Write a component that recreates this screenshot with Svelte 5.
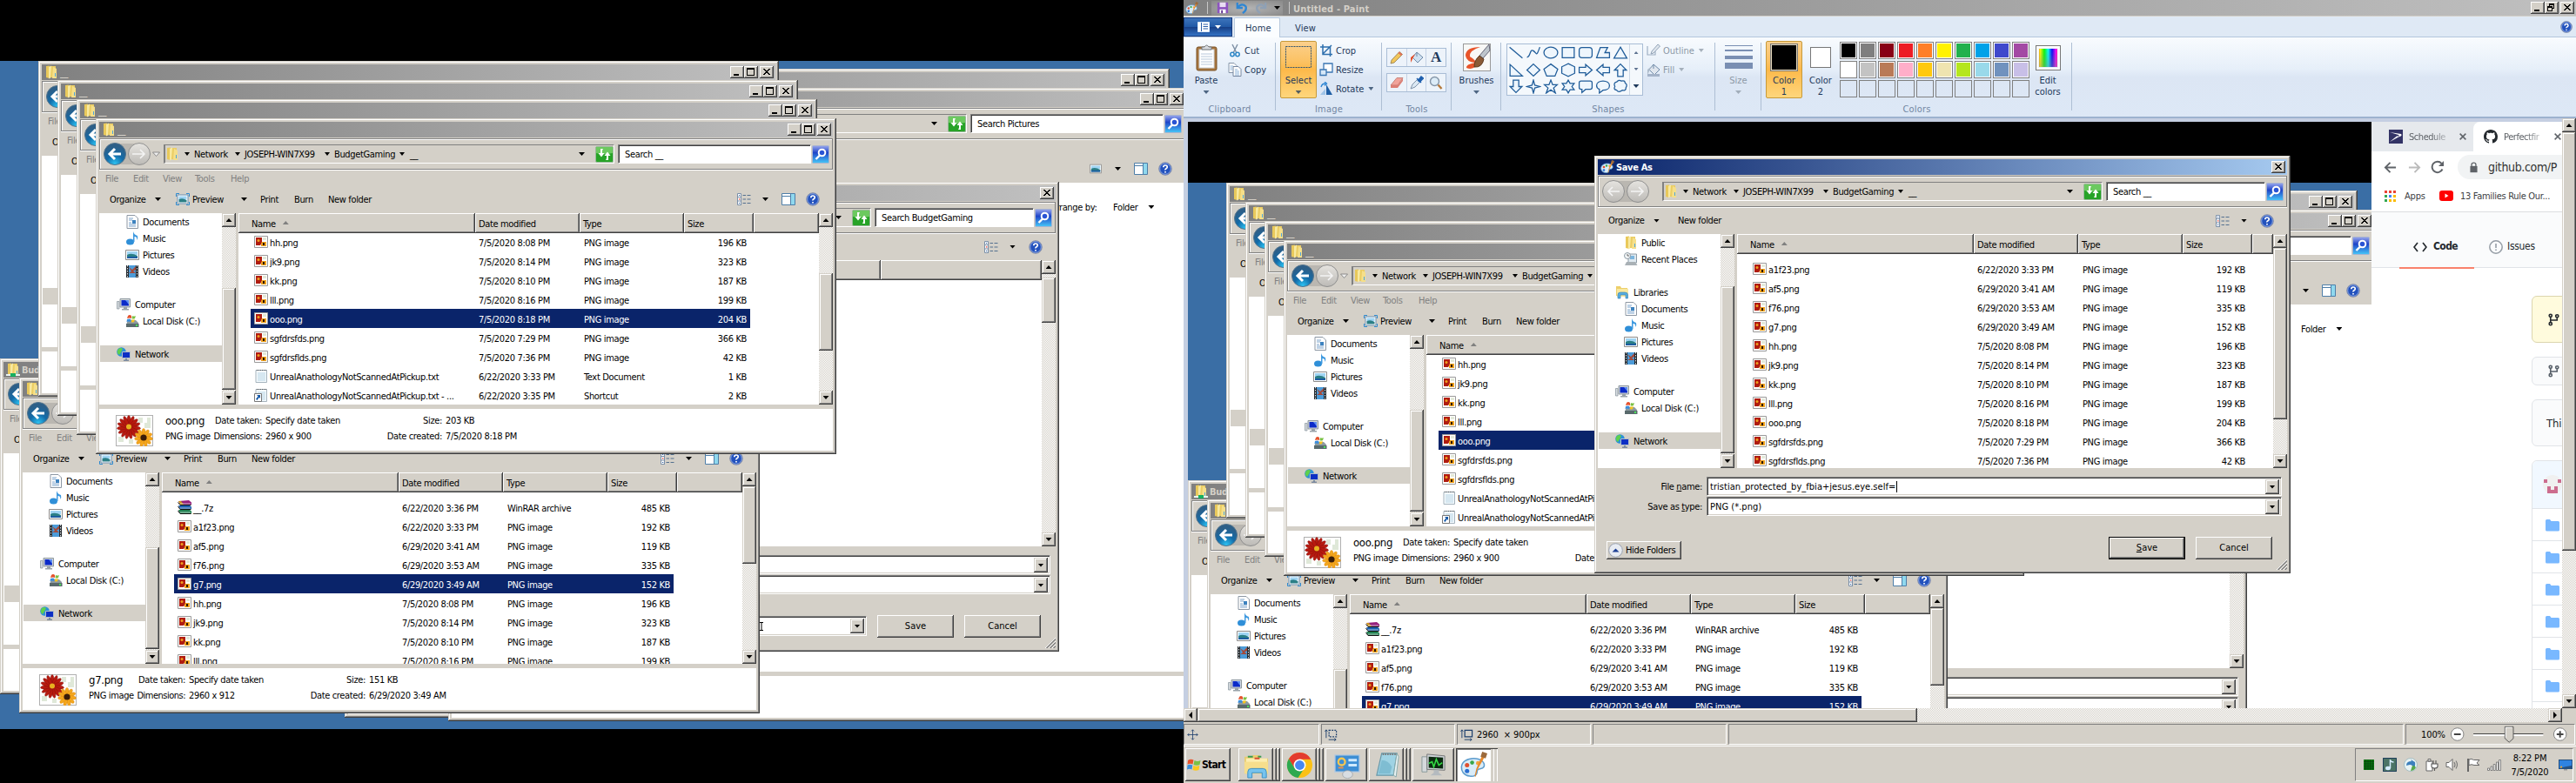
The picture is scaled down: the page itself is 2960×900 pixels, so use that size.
<script>
  const png = (name, date, size) => ({ icon: 'png', name, date, type: 'PNG image', size: size + ' KB' });
  const early = [
    png('a1f23.png', '6/22/2020 3:33 PM', 192),
    png('af5.png', '6/29/2020 3:41 AM', 119),
    png('f76.png', '6/29/2020 3:53 AM', 335),
    png('g7.png', '6/29/2020 3:49 AM', 152)
  ];
  const late = [
    png('hh.png', '7/5/2020 8:08 PM', 196),
    png('jk9.png', '7/5/2020 8:14 PM', 323),
    png('kk.png', '7/5/2020 8:10 PM', 187),
    png('lll.png', '7/5/2020 8:16 PM', 199),
    png('ooo.png', '7/5/2020 8:18 PM', 204),
    png('sgfdrsfds.png', '7/5/2020 7:29 PM', 366),
    png('sgfdrsflds.png', '7/5/2020 7:36 PM', 42)
  ];
  const archive = { icon: 'rar', name: '__.7z', date: '6/22/2020 3:36 PM', type: 'WinRAR archive', size: '485 KB' };
  const tail = [
    { icon: 'txt', name: 'UnrealAnathologyNotScannedAtPickup.txt', date: '6/22/2020 3:33 PM', type: 'Text Document', size: '1 KB' },
    { icon: 'lnk', name: 'UnrealAnathologyNotScannedAtPickup.txt - ...', date: '6/22/2020 3:35 PM', type: 'Shortcut', size: '2 KB' }
  ];
  const rowsLate = [...late, ...tail];
  const rowsEarly = [archive, ...early, ...late.slice(0, 4)];
  const rowsSave = [...early, ...late];

  const navLower = [
    { icon: 'doc', text: 'Documents', sub: true },
    { icon: 'music', text: 'Music', sub: true },
    { icon: 'pic', text: 'Pictures', sub: true },
    { icon: 'video', text: 'Videos', sub: true },
    {},
    { icon: 'computer', text: 'Computer' },
    { icon: 'disk', text: 'Local Disk (C:)', sub: true },
    {},
    { icon: 'network', text: 'Network', on: true }
  ];
  const navSave = [
    { icon: 'folder', text: 'Public', sub: true },
    { icon: 'recent', text: 'Recent Places', sub: true },
    {},
    { icon: 'library', text: 'Libraries' },
    ...navLower
  ];

  const oooInfo = { name: 'ooo.png', dim: '2960 x 900', size: '203 KB', created: '7/5/2020 8:18 PM' };
  const g7Info = { name: 'g7.png', dim: '2960 x 912', size: '151 KB', created: '6/29/2020 3:49 AM' };
  const stack = (x, y) => ({ x, y, w: 851, h: 386, icon: 'folder', title: '__', search: '__', rows: rowsLate, sel: 4, off: 0, thumb: [69, 89], info: oooInfo });
  const windows = [
    { ...stack(0, 412), icon: 'netfolder', title: 'BudgetGaming' },
    { ...stack(22, 434), rows: rowsEarly, off: 7, thumb: [16, 89], info: g7Info },
    stack(44, 70),
    stack(66, 92),
    stack(88, 114),
    stack(110, 136)
  ];

  const palette = [
    '#000', '#7f7f7f', '#880015', '#ed1c24', '#ff7f27', '#fff200', '#22b14c', '#00a2e8', '#3f48cc', '#a349a4',
    '#fff', '#c3c3c3', '#b97a57', '#ffaec9', '#ffc90e', '#efe4b0', '#b5e61d', '#99d9ea', '#7092be', '#c8bfe7',
    '', '', '', '', '', '', '', '', '', ''
  ];
  const shapes = [
    'M1 2L15 14', 'M1 13C5 13 4 3 8 6S11 13 15 2', 'M8 2C12 2 15.500 4.500 15.500 8S12 14 8 14 .5 11.500 .5 8 4 2 8 2Z', 'M1.500 2.500H14.500V13.500H1.500Z', 'M4 2.500H12Q15 2.500 15 5.500V10.500Q15 13.500 12 13.500H4Q1 13.500 1 10.500V5.500Q1 2.500 4 2.500Z', 'M5 2.500H13L10 8H15V13.500H1Z', 'M8 2L15 14H1Z',
    'M1.500 2V14.500H15Z', 'M8 1.500L15 8L8 14.500L1 8Z', 'M8 1.500L15.500 7L12.500 14.500H3.500L.5 7Z', 'M8 1L15 4.500V11.500L8 15L1 11.500V4.500Z', 'M1 5H8V2L15 8L8 14V11H1Z', 'M15 5H8V2L1 8L8 14V11H15Z', 'M5 15V8H1.500L8 1.500L14.500 8H11V15Z',
    'M5 1V8H1.500L8 14.500L14.500 8H11V1Z', 'M8 1L9.500 6.500L15 8L9.500 9.500L8 15L6.500 9.500L1 8L6.500 6.500Z', 'M8 1L10 6H15L11 9.500L13 15L8 11.500L3 15L5 9.500L1 6H6Z', 'M8 1L10 4.500H14.500L12 8L14.500 11.500H10L8 15L6 11.500H1.500L4 8L1.500 4.500H6Z', 'M3 2H13Q15 2 15 4V9Q15 11 13 11H8L4 14.500V11H3Q1 11 1 9V4Q1 2 3 2Z', 'M8 2C12 2 15 4 15 7S12 12 8 12L4 15V11C2 10 1 9 1 7 1 4 4 2 8 2Z', 'M4 3Q6 0 9 2Q13 1 13 4Q16 6 14 9Q14 13 10 12Q6 15 4 12Q0 11 2 8Q0 4 4 3Z'
  ];
  const tasks = [
    { icon: 'explorer', multi: true }, { icon: 'chrome', multi: true }, { icon: 'panel' },
    { icon: 'notepad', multi: true }, { icon: 'monitor' }, { icon: 'palette', multi: true, on: true }
  ];
  const redPetals = Array.from({ length: 15 }, (_, i) => i * 24);
  const goldPetals = Array.from({ length: 11 }, (_, i) => i * 32.7);
</script>

{#snippet icon(name, s = 16)}
  <svg width={s} height={s} viewBox="0 0 16 16" class="ic">
    {#if name === 'folder' || name === 'netfolder'}
      <path d="M2 1L6 .5V15L2 14Z" fill="#e9c95b" /><path d="M5 2L8 .5V14L5 15.500Z" fill="#f8e9a0" />
      <path d="M8 1H13V14H7Z" fill="#ebcd63" /><path d="M10 2L14 4V15H9Z" fill="#f5df8a" /><path d="M12 9h1v4h-1z" fill="#4da6e0" />
      {#if name === 'netfolder'}<path d="M0 13H16V15H0Z" fill="#e8f4f0" /><path d="M5 12H11V16H5Z" fill="#18b060" />{/if}
    {:else if name === 'doc'}
      <path d="M2 .5H11L14.500 4V15.500H2Z" fill="#fff" stroke="#8d97a3" /><path d="M4 4H9M4 6H8M4 9H7M4 11H12M4 13H12" stroke="#7fa5cc" /><path d="M8 6H12V10H8Z" fill="#3d82bf" />
    {:else if name === 'txt' || name === 'lnk'}
      <path d="M2 1.500H14.500V15.500H2Z" fill="#f4fafd" stroke="#a5b3bd" /><path d="M3 1.500H14" stroke="#555" stroke-dasharray="1 1" /><path d="M4 5H13M4 7H13M4 9H13M4 11H13M4 13H13" stroke="#b8d4e4" />
      {#if name === 'lnk'}<path d="M.5 6.500H8.500V15.500H.5Z" fill="#fff" stroke="#777" /><path d="M3 8H7V12L5.800 10.800L3.500 14L2 12.800L4.500 9.500Z" fill="#1559a8" />{/if}
    {:else if name === 'music'}
      <ellipse cx="5.500" cy="12" rx="4.500" ry="3.500" fill="#2f8fd8" /><path d="M9 12V0Q10 4 14 5Q15 8 13 10Q14 6 10.500 6V12Z" fill="#3f9ae0" />
    {:else if name === 'pic' || name === 'view'}
      <path d="M.5 2.500H15.500V13.500H.5Z" fill="#fff" stroke="#8c8c8c" /><path d="M2 4H14V8H2Z" fill="#9fd4f3" /><path d="M2 8Q7 5 14 9V12H2Z" fill="#2b7f86" /><path d="M2 10H14V12H2Z" fill="#1d5da0" />
    {:else if name === 'preview'}
      <path d="M2 3H14V13H2Z" fill="#fff" stroke="#6a8fb0" /><path d="M3.500 4.500H12.500V8H3.500Z" fill="#9fd4f3" /><path d="M3.500 8Q8 6 12.500 9V11.500H3.500Z" fill="#2b7f86" /><path d="M.5 5V1.500H4M12 1.500H15.500V5M15.500 11V14.500H12M4 14.500H.5V11" fill="none" stroke="#2e8ad0" />
    {:else if name === 'video'}
      <path d="M1 1H15V15H1Z" fill="#23282d" /><path d="M4 1H12V15H4Z" fill="#4c9bd8" /><path d="M4 3L8 6L12 2V6L9 7.500L12 10H4L7 8Z" fill="#a34a3a" /><path d="M2.500 1V15M13.500 1V15" stroke="#dfe6ea" stroke-dasharray="1.500 1.500" />
    {:else if name === 'computer'}
      <path d="M.5 4.500H3V13H.5Z" fill="#d7dce0" stroke="#84909a" stroke-width=".7" /><path d="M4 1.500H15.500V11H4Z" fill="#d3d8dc" stroke="#8c979f" /><path d="M5.500 3H14V9.500H5.500Z" fill="#0c2bc8" /><path d="M10 3H14V8Z" fill="#5c8cf0" /><path d="M8 11H12V13H14V14.500H6V13H8Z" fill="#9aa3aa" />
    {:else if name === 'disk'}
      <path d="M2 9L4 7H12L15 10V14H1Z" fill="#8d9aa0" /><path d="M1 11H15.500V15H1Z" fill="#596a6c" /><path d="M12 12H14V14H12Z" fill="#4be05b" /><path d="M3 2Q5 0 7 2V5Q5 4 2 5Z" fill="#e6532d" /><path d="M8 2Q10 3 12 2L11 5Q9 6 7.500 5Z" fill="#7ac043" /><path d="M2 6Q5 5 6.500 6L6 9Q4 8 1.500 9Z" fill="#3a8ddb" /><path d="M7.500 6Q9 7 11 6L10 9Q8 10 7 9Z" fill="#f8c51c" />
    {:else if name === 'network'}
      <circle cx="5.500" cy="5.500" r="5.300" fill="#2c90d8" /><path d="M2 2Q5 0 7 2L5 6L3 9Q0 7 1 4Z" fill="#5ed04c" /><path d="M6.500 5.500H15.500V12.500H6.500Z" fill="#0d2fc4" stroke="#b4bfc9" /><path d="M10 13H12V14.500H14V16H8V14.500H10Z" fill="#7c8ba0" />
    {:else if name === 'recent'}
      <path d="M5 2H14.500V12H5Z" fill="#dfe9f0" stroke="#8c9aa5" /><path d="M7 4H12V8H7Z" fill="#7db6df" /><path d="M3 11H13L15.500 15H1Z" fill="#a9b1b6" /><circle cx="4" cy="4" r="3.500" fill="#f3f6f7" stroke="#8e9ba5" /><path d="M4 2V4H6" stroke="#444" fill="none" stroke-width=".8" />
    {:else if name === 'library'}
      <path d="M1 1H6L7 3H14V12H1Z" fill="#edcf6a" /><path d="M2 4H15V13H2Z" fill="#f8e8a0" /><path d="M3 15V11Q3 8 6 8H11Q14.500 8 14.500 11V15H12V11H6V15Z" fill="#58aee0" stroke="#2f7db4" stroke-width=".6" />
    {:else if name === 'png'}
      <path d="M.5 1.500H15.500V14.500H.5Z" fill="#fff" stroke="#9a9a9a" /><path d="M2 3H9V9L7 12H2Z" fill="#b01c10" /><circle cx="5" cy="6.500" r="1.500" fill="#f0a020" /><path d="M9 8H14V13H8V10Z" fill="#f0a21c" /><path d="M10 9H12V12H10Z" fill="#2d1608" /><path d="M10 3H14V6H10Z" fill="#e3e9d8" />
    {:else if name === 'rar'}
      <path d="M1 1L13 0L16 2.500V5H3Z" fill="#96207c" /><path d="M1 1H4L7 5H3Z" fill="#c99a20" /><path d="M1 6H14L16 7.500V10H3Z" fill="#1a5fae" /><path d="M1 11H14L16 12.500V15.500H3Z" fill="#1f8050" /><path d="M.5 2.500L3 5.500H15.500M.5 7L3 10.500H15.500M.5 12L3 15.500H15.500" stroke="#111" fill="none" /><path d="M3 4H15M3 9H15M3 14H15" stroke="#eee" stroke-width=".7" />
    {:else if name === 'details'}
      <path d="M.5 1.500H4.500V15M.5 1.500V14.500H4.500M.5 5.500H4.500M.5 10H4.500" stroke="#7a8fa8" fill="#fff" /><path d="M2 3H3.200V4H2ZM2 12H3.200V13H2Z" fill="#2a5ca0" /><path d="M2 7.200H3.400V8.600H2Z" fill="#e03020" /><path d="M6.500 3.500H10M11.500 3.500H15.500M6.500 8H10M11.500 8H15.500M6.500 12.500H10M11.500 12.500H15.500" stroke="#54708f" stroke-width="1.200" />
    {:else if name === 'pane'}
      <path d="M.5 1.500H15.500V14.500H.5Z" fill="#fff" stroke="#4e7ea8" /><path d="M10.500 2V14H15V2Z" fill="#8fd8ee" /><path d="M1 4.500H10M10.500 2V14" stroke="#4e7ea8" fill="none" />
    {:else if name === 'help'}
      <circle cx="8" cy="8" r="7.300" fill="#2352bd" stroke="#8a92a8" /><circle cx="8" cy="8" r="6.300" fill="none" stroke="#9fb6e8" stroke-width=".8" /><path d="M5.800 6.200Q5.800 4 8 4T10.300 6Q10.300 7 9 7.800T8 9.500M8 11V12.600" fill="none" stroke="#fff" stroke-width="1.700" />
    {:else if name === 'paint' || name === 'palette'}
      <path d="M8 4C12 4 15 6.500 14 9C13 11 10 9.500 10 11.500C10 14 8 15 5.500 14.500C2 14 .5 11.500 .7 9C1 6 4 4 8 4Z" fill="#d9ecf8" stroke="#5d9ccd" stroke-width=".8" /><circle cx="4" cy="8" r="1.300" fill="#e05030" /><circle cx="7" cy="6.500" r="1.200" fill="#38a648" /><circle cx="4" cy="11.500" r="1.300" fill="#2b6ed0" /><circle cx="10.500" cy="6.800" r="1.200" fill="#f2a33c" />
      <path d="M15 2L10 11L9 15L8.500 14.500L9.500 10L13 2Z" fill="#e88a2c" /><path d="M12 3L13 0L16 1L15 4Z" fill="#9c6a3c" />
    {:else if name === 'save'}
      <path d="M1 1H15V15H1Z" fill="#8d54bf" /><path d="M4 1H12V7H4Z" fill="#e9ddf3" /><path d="M4 10H12V15H4Z" fill="#fff" /><path d="M6 11H8V15H6Z" fill="#5b2a8c" />
    {:else if name === 'undo'}
      <path d="M2 1V8H9M2.500 7.500Q8 1 13 6Q15 11 9 15" fill="none" stroke="#2e86d4" stroke-width="2.600" />
    {:else if name === 'redo'}
      <path d="M14 1V8H7M13.500 7.500Q8 1 3 6Q1 11 7 15" fill="none" stroke="#8fa0b4" stroke-width="2.600" />
    {:else if name === 'cut'}
      <path d="M5 1L10 11M11 1L6 11" stroke="#7d8fa4" stroke-width="1.400" /><circle cx="5" cy="12.500" r="2.200" fill="none" stroke="#2d86c6" stroke-width="1.500" /><circle cx="11" cy="12.500" r="2.200" fill="none" stroke="#2d86c6" stroke-width="1.500" />
    {:else if name === 'copy'}
      <path d="M1 .5H7L10 3.500V11.500H1Z" fill="#fff" stroke="#8494a8" /><path d="M6 4.500H12L15 7.500V15.500H6Z" fill="#fff" stroke="#7586a0" /><path d="M8 8H11M8 10H13M8 12H13M8 14H13M2.500 4H6M2.500 6H5M2.500 8H5" stroke="#8fb4da" />
    {:else if name === 'crop'}
      <path d="M4 1V12.500H15M1 4H12.500V15M4 12L14 2" fill="none" stroke="#2d6fad" stroke-width="1.500" />
    {:else if name === 'resize'}
      <path d="M5 1H15V11H5Z" fill="#fff" stroke="#3a76b3" stroke-width="1.300" /><path d="M1 8H8V14.500H1Z" fill="#d6e8f8" stroke="#3a76b3" stroke-width="1.300" />
    {:else if name === 'rotate'}
      <path d="M8 3V15H15Z" fill="#1f5fa5" /><path d="M7 8V15H1Z" fill="#9fc4e8" /><path d="M2 6Q3 2 7 2M6 0L8.500 2L6 4.500" fill="none" stroke="#2e86d4" stroke-width="1.300" />
    {:else if name === 'pencil'}
      <path d="M1 15L2 11L11 1.500L14.500 4.500L5 14Z" fill="#f1c65b" stroke="#8f7a4a" stroke-width=".8" /><path d="M11 1.500L14.500 4.500L13 6L9.500 3Z" fill="#e0705a" />
    {:else if name === 'bucket' || name === 'fill'}
      <path d="M8 2L15 8L9 14L3 8Z" fill={name === 'fill' ? '#e0e6ee' : '#cfe0f0'} stroke="#6f8aa8" /><path d="M6 4L1 8V14L4 8Z" fill={name === 'fill' ? '#aebccb' : '#e3502c'} /><path d="M8 2V7" stroke="#6f8aa8" />
      {#if name === 'fill'}<path d="M1 13H15V16H1Z" fill="#a4b3c8" />{/if}
    {:else if name === 'outline'}
      <path d="M1 3V13H10V9" fill="none" stroke="#9fb0c4" stroke-width="1.200" /><path d="M5 12L6 9L13 1L15.500 3L8 11Z" fill="#dfe6ee" stroke="#93a4b8" />
    {:else if name === 'eraser'}
      <path d="M1 11L8 2.500H15L9 11Z" fill="#f1a39a" stroke="#b8695e" stroke-width=".7" /><path d="M1 11H9V14H1ZM9 11L15 3V6L9 14Z" fill="#dc7e74" />
    {:else if name === 'pick'}
      <path d="M1 15L3 10L9 4L12 7L6 13Z" fill="#dbe8f3" stroke="#8094aa" /><path d="M8 3L13 8M9.500 5.500L13 1L15.500 3L11.500 7Z" fill="#1e5fae" stroke="#1e5fae" stroke-width="1.500" />
    {:else if name === 'zoom'}
      <circle cx="6.500" cy="6.500" r="5" fill="#dcecf8" stroke="#8495a8" stroke-width="1.400" /><path d="M10.500 10.500L14.500 15" stroke="#b5793a" stroke-width="2.400" />
    {:else if name === 'fork'}
      <g fill="none" stroke="currentColor" stroke-width="1.700"><circle cx="4" cy="3" r="1.700" /><circle cx="4" cy="13" r="1.700" /><circle cx="12" cy="3.500" r="1.700" /><path d="M4 5V11M12 5.500V8.500H4" /></g>
    {:else if name === 'dir'}
      <path d="M0 2.500Q0 1 1.500 1H5L6.500 3H14.500Q16 3 16 4.500V13Q16 14.500 14.500 14.500H1.500Q0 14.500 0 13Z" fill="#79b8ff" />
    {:else if name === 'github'}
      <path fill="#24292e" d="M8 0C3.580 0 0 3.580 0 8c0 3.540 2.290 6.530 5.470 7.590.4.070.55-.17.55-.38 0-.19-.01-.82-.01-1.490-2.010.37-2.530-.49-2.690-.94-.09-.23-.48-.94-.82-1.130-.28-.15-.68-.52-.01-.53.63-.01 1.080.58 1.230.82.72 1.210 1.870.87 2.330.66.070-.52.28-.87.51-1.070-1.780-.2-3.640-.89-3.640-3.950 0-.87.31-1.590.82-2.150-.08-.2-.36-1.020.08-2.120 0 0 .67-.21 2.200.82.64-.18 1.320-.27 2-.27.68 0 1.360.09 2 .27 1.530-1.040 2.200-.82 2.200-.82.44 1.100.16 1.920.08 2.120.51.56.82 1.270.82 2.150 0 3.070-1.870 3.750-3.650 3.950.29.25.54.73.54 1.480 0 1.070-.01 1.930-.01 2.200 0 .21.15.46.55.38A8.013 8.013 0 0016 8c0-4.420-3.580-8-8-8z" />
    {:else if name === 'usps'}
      <path d="M0 0H16V16H0Z" fill="#333366" /><path d="M1 3L14 5Q16 7 11 8.500L1 14L9 7.500H12L11 6Z" fill="#fff" />
    {:else if name === 'back'}
      <path d="M15 8H2M8 2L2 8L8 14" fill="none" stroke="currentColor" stroke-width="2" />
    {:else if name === 'reload'}
      <path d="M13.500 10.500A6.200 6.200 0 1 1 12.500 3.800" fill="none" stroke="#5f6368" stroke-width="2" /><path d="M15 1V7H9Z" fill="#5f6368" />
    {:else if name === 'lock'}
      <path d="M3 6H13V15H3Z" fill="#5f6368" /><path d="M5 7V4Q5 1.500 8 1.500T11 4V7" fill="none" stroke="#5f6368" stroke-width="1.600" />
    {:else if name === 'youtube'}
      <rect y="2" width="16" height="12" rx="3" fill="#f00" /><path d="M6.500 5.500L10.500 8L6.500 10.500Z" fill="#fff" />
    {:else if name === 'x'}
      <path d="M3.500 3.500L12.500 12.500M12.500 3.500L3.500 12.500" stroke="#5f6368" stroke-width="2" />
    {:else if name === 'code'}
      <path d="M5 3L1 8L5 13M11 3L15 8L11 13" fill="none" stroke="#24292e" stroke-width="1.700" />
    {:else if name === 'issue'}
      <circle cx="8" cy="8" r="7.200" fill="none" stroke="#959da5" stroke-width="1.500" /><path d="M8 4V9M8 10.500V12" stroke="#959da5" stroke-width="1.600" />
    {:else if name === 'move'}
      <path d="M8 1V15M1 8H15M6 3L8 1L10 3M6 13L8 15L10 13M3 6L1 8L3 10M13 6L15 8L13 10" fill="none" stroke="#1d3f6c" />
    {:else if name === 'selsize' || name === 'imgsize'}
      <path d="M5.500 2.500H14.500V10.500H5.500Z" fill="none" stroke="#1d3f6c" stroke-width="1.300" stroke-dasharray={name === 'selsize' ? '2 1.300' : ''} /><path d="M2 12V2M.5 4L2 2L3.500 4M5 14H14M12 12.500L14 14L12 15.500" fill="none" stroke="#1d3f6c" />
    {:else if name === 'win'}
      <path d="M1 3Q4 1 7.500 2.500L6.500 7.500Q4 6 .5 7.500Z" fill="#e8522b" /><path d="M8.500 3Q12 5 15.500 3L14.500 8Q11 9.500 7.500 8Z" fill="#7ac143" /><path d="M.5 8.500Q3 7 6.300 8.500L5.500 13.500Q3 12 0 13.500Z" fill="#3b8fdc" /><path d="M7.300 9Q10 10.500 14.300 9L13.500 14Q10 15.500 6.500 14Z" fill="#fbc91e" />
    {:else if name === 'explorer'}
      <path d="M1 3H5L6 2H10V4H15V13H1Z" fill="#e9cd72" /><path d="M2 4H14.500V13H2Z" fill="#fbedb0" /><path d="M3 3H6M9 3H11" stroke="#3a9c50" /><path d="M7 4H10" stroke="#d94c30" /><path d="M1 6H15V13H1Z" fill="#f6de8c" /><path d="M3 15.500V12Q3 10 5 10H12Q14 10 14 12V15.500H11.500V12.500H5.500V15.500Z" fill="#76c3ee" stroke="#3c8fc4" stroke-width=".5" />
    {:else if name === 'chrome'}
      <circle cx="8" cy="8" r="7.500" fill="#fbc116" /><path d="M8 .5A7.500 7.500 0 0 0 1.500 4.300L5 10L8 4.500H14.600A7.500 7.500 0 0 0 8 .5Z" fill="#e33b2e" /><path d="M1.500 4.200A7.500 7.500 0 0 0 7 15.500L10.500 10L8 11.500L4.900 9.800Z" fill="#2da94f" /><circle cx="8" cy="8" r="3.600" fill="#fff" /><circle cx="8" cy="8" r="2.800" fill="#4688f1" />
    {:else if name === 'panel'}
      <path d="M1 2H15.500V12H1Z" fill="#3d8ed4" stroke="#b7cbe0" stroke-width=".7" /><circle cx="5" cy="6" r="2" fill="none" stroke="#f8c750" stroke-width="1.200" /><path d="M9 5H14M9 8H14" stroke="#cfe9ff" stroke-width="1.500" /><path d="M3 9.500H6" stroke="#e9904c" /><ellipse cx="8.500" cy="13.500" rx="3" ry="2.300" fill="#d8dde2" stroke="#9aa0a6" stroke-width=".4" />
    {:else if name === 'notepad'}
      <path d="M5 1H14L12 14H2Z" fill="#9fd3e4" stroke="#6797a8" stroke-width=".6" /><path d="M14 1L15 3L13.500 15L12 14Z" fill="#e9f2f4" stroke="#8aa" stroke-width=".5" /><path d="M5.500 1.500H14" stroke="#777" stroke-dasharray=".8 .6" /><path d="M5 5Q9 5 11 9L10 13L3 13Z" fill="#7fbdd2" />
    {:else if name === 'monitor'}
      <path d="M1 3H4V12H1Z" fill="#d5d9dc" stroke="#899" stroke-width=".5" /><path d="M4 1.500L14.500 2.500V11L4 10.500Z" fill="#ccd2d6" stroke="#777" stroke-width=".5" /><path d="M5 3L13.500 3.500V10L5 9.500Z" fill="#0b2a10" /><path d="M5 7L7 6L8 9L9.500 4.500L11 8L13 6.500" stroke="#33dd44" fill="none" stroke-width=".8" /><path d="M8 11H11V12.500L13 14H6L8 12.500Z" fill="#b4babf" />
    {:else if name === 't1'}
      <path d="M2 2H14V14H2Z" fill="#0a7a12" /><path d="M2 4.500H14M2 7H14M2 9.500H14M2 12H14M4.500 2V14M7 2V14M9.500 2V14M12 2V14" stroke="#053c08" stroke-width=".7" />
    {:else if name === 't2'}
      <path d="M0 0H16V16H0Z" fill="#4c7466" /><path d="M.5 .5H15.500V15.500H.5Z" fill="none" stroke="#20405c" /><ellipse cx="6" cy="12" rx="3" ry="2.200" fill="#d6ecff" /><path d="M8.500 12V2Q9 5 12.500 5" fill="none" stroke="#d6ecff" stroke-width="1.500" />
    {:else if name === 't3'}
      <circle cx="8" cy="8" r="7.500" fill="#e8f3f4" stroke="#8fb0b8" stroke-width=".7" /><path d="M3 9Q3 4 9 4L8 2L13 5Q14 10 11 13Q11 8 7 8Z" fill="#3d80bd" /><path d="M10 9Q13 9 14 11Q12 15 8 15Z" fill="#58a84c" />
    {:else if name === 't4'}
      <path d="M2 4H9V15H2ZM4 1.500H7V4H4Z" fill="#fff" stroke="#666" /><path d="M8 7H15V10Q15 12 11.500 12T8 10ZM10 7V3M13 7V3M11.500 12V15" fill="#fff" stroke="#555" stroke-width="1.100" />
    {:else if name === 't5'}
      <path d="M1 5.500H4L8 1.500V14.500L4 10.500H1Z" fill="#fff" stroke="#666" /><path d="M10 5Q12 8 10 11M12 3.500Q15 8 12 12.500" fill="none" stroke="#777" stroke-width="1.100" />
    {:else if name === 't6'}
      <path d="M2 1V16" stroke="#666" stroke-width="2" /><path d="M3 2Q6 .5 8.500 2.500H15L12 6L15 8.500H9Q6 7 3 8.500Z" fill="#fff" stroke="#666" />
    {:else if name === 't7'}
      <path d="M.5 12H2.500V14.500H.5ZM4 10H6V14.500H4ZM7.200 7.500H9.200V14.500H7.200ZM10.500 5H12.500V14.500H10.500ZM13.500 2.500H15.500V14.500H13.500Z" fill="#fff" stroke="#777" stroke-width=".9" />
    {:else if name === 'show'}
      <path d="M0 2H16V13H0Z" fill="#26507e" /><path d="M1 3H15V9Q8 10 1 12Z" fill="#2f83e0" /><path d="M2 10L4 9.500V11.500H2Z" fill="#f6a522" /><path d="M6 13H10V14.500H6Z" fill="#999" />
    {/if}
  </svg>
{/snippet}

{#snippet caption(glyph)}
  <span class="cap">
    <svg width="16" height="14" viewBox="0 0 16 14" shape-rendering="crispEdges">
      {#if glyph === 'min'}<path d="M4 9H10V11H4Z" />
      {:else if glyph === 'max'}<path d="M3 2H12V11H3ZM4 4V10H11V4Z" fill-rule="evenodd" />
      {:else if glyph === 'restore'}<path d="M5 2H11V8H9V11H3V5H5ZM6 4V5H9V7H10V4ZM4 7V10H8V7Z" fill-rule="evenodd" />
      {:else}<path d="M4 3H6V4H7V5H9V4H10V3H12V4H11V5H10V6H9V7H10V8H11V9H12V10H10V9H9V8H7V9H6V10H4V9H5V8H6V7H7V6H6V5H5V4H4Z" />{/if}
    </svg>
  </span>
{/snippet}

{#snippet titlebar(ic, text, dialog = false, active = false)}
  <div class="title" class:active>
    {@render icon(ic)}
    <b>{text}</b>
    {#if !dialog}{@render caption('min')}{@render caption('max')}{/if}
    <span class="closegap"></span>{@render caption('close')}
  </div>
{/snippet}

{#snippet vscroll(start, size)}
  <div class="vs">
    <span class="sb"><i class="up"></i></span>
    <span class="thumb" style="margin-top:{start - 16}px;height:{size}px"></span>
    <span class="sb last"><i class="dn"></i></span>
  </div>
{/snippet}

{#snippet band(search, dialog)}
  <div class="band" class:dialog>
    <svg class="circles" width={dialog ? 56 : 72} height="30" viewBox="0 0 {dialog ? 56 : 72} 30">
      <defs>
        <radialGradient id="bk" cx=".5" cy=".95" r=".8"><stop offset="0" stop-color="#2cc4f4" /><stop offset=".5" stop-color="#136ba8" /><stop offset="1" stop-color="#2d5f88" /></radialGradient>
        <linearGradient id="fw" x2="0" y2="1"><stop offset="0" stop-color="#e6e4e0" /><stop offset="1" stop-color="#bcbab6" /></linearGradient>
      </defs>
      <path d="M14 3H42Q36 14 42 27H14Z" fill="#bab7b1" />
      <circle cx="14" cy="15" r="12.500" fill={dialog ? 'url(#fw)' : 'url(#bk)'} stroke={dialog ? '#8f8f8f' : '#54748c'} />
      <circle cx="42" cy="15" r="12.500" fill="url(#fw)" stroke="#8f8f8f" />
      <path d={dialog ? 'M21 15H8M13 10L8 15L13 20' : 'M21 15H9M14 9L8 15L14 21'} fill="none" stroke={dialog ? '#f4f4f4' : '#fff'} stroke-width={dialog ? 1.600 : 3} />
      <path d="M34 15H48M43 10L48 15L43 20" fill="none" stroke="#f4f4f4" stroke-width="1.600" />
      {#if !dialog}<path d="M57.500 13H65.500L61.500 17.500Z" fill="#eee" stroke="#777" stroke-width=".8" />{/if}
    </svg>
    <div class="addr">
      <div class="crumbs">
        {@render icon('folder')}<i class="dn s"></i><span>Network</span><i class="dn s"></i><span>JOSEPH-WIN7X99</span><i class="dn s"></i><span>BudgetGaming</span><i class="dn s"></i><span>__</span>
      </div>
      <i class="dn"></i>
      <svg class="go" width="21" height="19" viewBox="0 0 21 19"><rect x=".5" y=".5" width="20" height="18" rx="1.500" fill="#27a327" stroke="#9bb89b" /><path d="M1 1H20V8Q10 10 1 8Z" fill="#6cc95f" /><path d="M9 3H6V8H3.500L7 12.500L10.500 8H8V5ZM12 16H15V11H17.500L14 6.500L10.500 11H13V14Z" fill="#fff" /></svg>
    </div>
    <div class="find"><span>Search {search}</span></div>
    <svg class="lens" width="20" height="21" viewBox="0 0 20 21"><defs><linearGradient id="ln" x2="0" y2="1"><stop offset="0" stop-color="#9aa8ee" /><stop offset=".4" stop-color="#1f45c8" /><stop offset="1" stop-color="#46c8f8" /></linearGradient></defs><rect x=".5" y=".5" width="19" height="20" rx="1" fill="url(#ln)" stroke="#a8b4d0" /><circle cx="11.500" cy="8.500" r="3.800" fill="#2a54d4" stroke="#fff" stroke-width="2" /><path d="M9 11.500L4.500 16" stroke="#fff" stroke-width="2.400" /></svg>
  </div>
{/snippet}

{#snippet nav(items, thumb)}
  <div class="nav">
    {#each items as n}
      <div class="nrow" class:on={n.on} class:sub={n.sub}>{#if n.text}{@render icon(n.icon)}<span>{n.text}</span>{/if}</div>
    {/each}
  </div>
  {@render vscroll(thumb[0], thumb[1])}
{/snippet}

{#snippet list(rows, sel, off, thumb)}
  <div class="list">
    <div class="head">
      {#if rows.length}<span class="c1">Name<i class="sort"></i></span><span>Date modified</span><span>Type</span><span class="c4">Size</span>{:else}<span class="c0"></span>{/if}
      <span class="c5"></span>
    </div>
    <div class="rows" style="padding-top:{off}px">
      {#each rows as r, i}
        <div class="row" class:sel={i === sel}>{@render icon(r.icon)}<span class="n">{r.name}</span><span class="d">{r.date}</span><span class="d">{r.type}</span><span class="z">{r.size}</span></div>
      {/each}
    </div>
  </div>
  {@render vscroll(thumb[0], thumb[1])}
{/snippet}

{#snippet flower()}
  <svg class="flower" width="43" height="36" viewBox="0 0 43 36">
    <rect x=".5" y=".5" width="42" height="35" fill="#fff" stroke="#b0b0b0" />
    <path d="M26 3H31V9H36V3H40V15H33V9H26ZM3 25H9V31H3ZM15 28H20V33H15Z" fill="#dfe8d8" />
    {#each redPetals as a}<ellipse cx="15" cy="6.500" rx="2" ry="6" fill="#b8190f" stroke="#86120c" stroke-width=".5" transform="rotate({a} 15 14)" />{/each}
    <circle cx="15" cy="13.500" r="3" fill="#e8b020" />
    {#each goldPetals as a}<ellipse cx="32" cy="20" rx="2" ry="4.500" fill="#f4a71d" stroke="#d8820f" stroke-width=".4" transform="rotate({a} 32 26)" />{/each}
    <circle cx="32" cy="26" r="3.600" fill="#3a1c08" />
  </svg>
{/snippet}

{#snippet explorer(w)}
  <section class="win" style="left:{w.x}px;top:{w.y}px;width:{w.w}px;height:{w.h}px">
    {@render titlebar(w.icon, w.title)}
    {@render band(w.search, false)}
    <div class="menu">{#if w.rows}<span>File</span><span>Edit</span><span>View</span><span>Tools</span><span>Help</span>{/if}</div>
    <div class="tools">
      {#if w.rows}
        <span class="org">Organize</span><i class="dn"></i><span class="pv">{@render icon('preview')}</span><span class="pt">Preview</span><i class="dn"></i><span class="pr">Print</span><span class="bu">Burn</span><span>New folder</span>
      {/if}
      <span class="fill"></span>
      <span class="vi">{@render icon(w.rows ? 'details' : 'view', w.rows ? 16 : 14)}</span><i class="dn"></i><span class="pn">{@render icon('pane')}</span>{@render icon('help')}
    </div>
    <div class="panes">
      {#if w.rows}
        {@render nav(navLower, [86, 117])}
        <div class="gap"></div>
        {@render list(w.rows, w.sel, w.off, w.thumb)}
      {:else}
        <div class="arrange"><span>Arrange by:</span><span>Folder</span><i class="dn"></i></div>
      {/if}
    </div>
    <div class="info">
      {#if w.info}
        {@render flower()}
        <div class="grid">
          <span class="fname">{w.info.name}</span><span class="r">Date taken:</span><span>Specify date taken</span><span class="r">Size:</span><span>{w.info.size}</span>
          <span>PNG image</span><span class="r tight">Dimensions:</span><span>{w.info.dim}</span><span class="r">Date created:</span><span>{w.info.created}</span>
        </div>
      {/if}
    </div>
  </section>
{/snippet}

{#snippet combo(text, caret = false)}
  <div class="combo"><span>{text}{#if caret}<i class="caret"></i>{/if}</span><span class="sb"><i class="dn"></i></span></div>
{/snippet}

{#snippet saveDialog(d)}
  <section class="win dlg" style="left:{d.x}px;top:{d.y}px;width:{d.w}px;height:{d.h}px">
    {@render titlebar('paint', 'Save As', true, d.active)}
    {@render band(d.search, true)}
    <div class="tools"><span class="org">Organize</span><i class="dn"></i><span class="nf">New folder</span><span class="fill"></span>{@render icon('details')}<i class="dn vd"></i>{@render icon('help')}</div>
    <div class="panes">
      {@render nav(navSave, d.nthumb)}
      <div class="gap"></div>
      {@render list(d.rows, -1, 7, d.thumb)}
    </div>
    <div class="form">
      <label>File <u>n</u>ame:</label>{@render combo(d.file, d.active)}
      <label>Save as <u>t</u>ype:</label>{@render combo('PNG (*.png)')}
    </div>
    <div class="acts">
      {#if d.active}
        <span class="hide"><svg width="17" height="17" viewBox="0 0 17 17"><circle cx="8.500" cy="8.500" r="7.800" fill="#e7ebf2" stroke="#9aa2b0" /><path d="M4.500 10.500L8.500 6.500L12.500 10.500Z" fill="#1c3f94" /></svg>Hide Folders</span>
        <span class="fill"></span>
      {:else}
        <span class="fill"></span><div class="enc">{@render combo('')}</div>
      {/if}
      <span class="btn" class:def={d.active}>{#if d.active}<u>S</u>ave{:else}Save{/if}</span><span class="btn">Cancel</span>
    </div>
    <svg class="grip" width="12" height="12" viewBox="0 0 12 12"><path d="M0 12L12 0M4 12L12 4M8 12L12 8" stroke="#fff" /><path d="M1.500 12L12 1.500M5.500 12L12 5.500M9.500 12L12 9.500" stroke="#808080" stroke-width="1.400" /></svg>
  </section>
{/snippet}

{#snippet desktop()}
  <div class="screen">
    <div class="desk">
      <div class="layer">
        {@render explorer({ x: 396, y: 79, w: 948, h: 746, icon: 'folder', title: '', search: '' })}
        {@render explorer({ x: 515, y: 101, w: 851, h: 728, icon: 'folder', title: '', search: 'Pictures' })}
        {@render saveDialog({ x: 256, y: 209, w: 961, h: 540, search: 'BudgetGaming', rows: [], thumb: [20, 52], nthumb: [60, 192], file: '', active: false })}
        <svg class="beam" width="6" height="10" viewBox="0 0 6 10"><path d="M1 .5H5M3 .5V9.500M1 9.500H5" stroke="#000" /></svg>
        {#each windows as w}{@render explorer(w)}{/each}
      </div>
    </div>
  </div>
{/snippet}

{#snippet small(ic, text, drop = false, off = false)}
  <div class="small" class:off>{@render icon(ic)}<span>{text}</span>{#if drop}<i class="dn"></i>{/if}</div>
{/snippet}

<main>
  <div class="left">{@render desktop()}</div>

  <div class="paint">
    <header>
      {@render icon('paint', 15)}<i class="bar"></i>
      <span class="qa">{@render icon('save', 14)}{@render icon('undo', 14)}{@render icon('redo', 14)}<i class="dn"></i></span>
      <i class="bar"></i><b>Untitled - Paint</b>
      {@render caption('min')}{@render caption('restore')}<span class="closegap"></span>{@render caption('close')}
    </header>
    <nav class="tabs">
      <span class="app"><svg width="14" height="12" viewBox="0 0 14 12"><path d="M.5 .5H13.500V11.500H.5Z" fill="#fff" stroke="#dbe8f8" /><path d="M4.500 1V11" stroke="#2a5da8" /><path d="M6.500 3H12M6.500 5.500H12M6.500 8H12" stroke="#2a5da8" /></svg><i class="dn"></i></span>
      <span class="tab on">Home</span><span class="tab">View</span><span class="fill"></span>{@render icon('help', 14)}
    </nav>
    <div class="ribbon">
      <div class="grp" style="width:106px">
        <div class="body">
          <div class="big"><div class="pic"><svg width="25" height="31" viewBox="0 0 25 31"><rect x="1" y="3" width="23" height="27" rx="2" fill="#a8763f" stroke="#7b5327" /><rect x="4" y="6" width="17" height="21" fill="#fff" stroke="#ccd3da" /><path d="M6 11H19M6 14H19M6 17H19M6 20H19M6 23H19" stroke="#b8c8da" /><path d="M7 6V3H10Q12.500 -1 15 3H18V6Z" fill="#d7dade" stroke="#73797f" /></svg></div><span>Paste</span><i class="dn"></i></div>
          <div class="col">{@render small('cut', 'Cut')}{@render small('copy', 'Copy')}</div>
        </div>
        <div class="lab">Clipboard</div>
      </div>
      <div class="grp" style="width:122px">
        <div class="body">
          <div class="big hot"><div class="pic"><svg width="32" height="28" viewBox="0 0 32 28"><rect x="1.500" y="1.500" width="29" height="24" fill="none" stroke="#2a5070" stroke-dasharray="2 1" /></svg></div><span>Select</span><i class="dn"></i></div>
          <div class="col im">{@render small('crop', 'Crop')}{@render small('resize', 'Resize')}{@render small('rotate', 'Rotate', true)}</div>
        </div>
        <div class="lab">Image</div>
      </div>
      <div class="grp" style="width:80px">
        <div class="body tb">
          <div class="trio"><span>{@render icon('pencil')}</span><span>{@render icon('bucket')}</span><span class="A">A</span></div>
          <div class="trio"><span>{@render icon('eraser')}</span><span>{@render icon('pick')}</span><span>{@render icon('zoom')}</span></div>
        </div>
        <div class="lab">Tools</div>
      </div>
      <div class="grp" style="width:57px">
        <div class="body mid"><div class="big"><div class="pic"><svg width="32" height="32" viewBox="0 0 32 32"><rect x=".5" y=".5" width="31" height="31" fill="#f8f8f6" stroke="#999" /><path d="M20 4Q3 4 3 14Q4 21 14 22Q3 24 4 28Q12 31 16 24Q15 19 8 15Q7 8 20 4Z" fill="#e8542a" /><path d="M30 1L31 8L23 17L19 14Z" fill="#bfc6cc" stroke="#667" /><path d="M19 14L24 18Q22 28 13 27Q13 19 19 14Z" fill="#8a5a35" stroke="#5c3a1e" /></svg></div><span>Brushes</span><i class="dn"></i></div></div>
      </div>
      <div class="grp" style="width:246px">
        <div class="body sh">
          <div class="gallery">
            <div class="shapes">{#each shapes as p}<svg width="18" height="17" viewBox="-.5 0 17 16"><path d={p} fill={p.endsWith('Z') ? '#eef6fd' : 'none'} stroke="#1f5c99" stroke-width="1.200" /></svg>{/each}</div>
            <div class="gs"><i class="up"></i><i class="dn"></i><i class="dn more"></i></div>
          </div>
          <div class="col">{@render small('outline', 'Outline', true, true)}{@render small('fill', 'Fill', true, true)}</div>
        </div>
        <div class="lab">Shapes</div>
      </div>
      <div class="grp" style="width:53px">
        <div class="body mid"><div class="big off"><div class="pic"><svg width="32" height="28" viewBox="0 0 32 28" fill="#7a8fb3"><path d="M0 0H32V1H0ZM0 5H32V7H0ZM0 12H32V16H0ZM0 20H32V27H0Z" /></svg></div><span>Size</span><i class="dn"></i></div></div>
      </div>
      <div class="grp" style="width:357px">
        <div class="body">
          <div class="big hot"><div class="pic"><b class="sw one"></b></div><span>Color</span><span>1</span></div>
          <div class="big"><div class="pic"><b class="sw two"></b></div><span>Color</span><span>2</span></div>
          <div class="pal">{#each palette as c}<span style={c ? `background-color:${c}` : ''} class:none={!c}></span>{/each}</div>
          <div class="big"><div class="pic"><b class="rainbow"></b></div><span>Edit</span><span>colors</span></div>
        </div>
        <div class="lab">Colors</div>
      </div>
    </div>

    <div class="work">
      <div class="canvas">
        <div class="sheet">
          {@render desktop()}
          <div class="chrome">
            <div class="ctabs">
              <div class="ct">{@render icon('usps')}<span>Schedule</span>{@render icon('x', 12)}</div>
              <div class="ct on">{@render icon('github')}<span>Perfectfir</span>{@render icon('x', 12)}</div>
            </div>
            <div class="cnav"><span class="bk">{@render icon('back', 15)}</span><span class="fwd">{@render icon('back', 15)}</span>{@render icon('reload', 16)}<div class="url">{@render icon('lock', 13)}<span>github.com/P</span></div></div>
            <div class="marks"><span class="dots">{#each ['#ea4335', '#ea4335', '#ea4335', '#34a853', '#4285f4', '#fbbc05', '#34a853', '#fbbc05', '#fbbc05'] as c}<i style="background:{c}"></i>{/each}</span><span class="ap">Apps</span>{@render icon('youtube')}<span class="fam">13 Families Rule Our...</span></div>
            <div class="gtabs"><div class="gt on">{@render icon('code', 16)}<b>Code</b></div><div class="gt">{@render icon('issue', 16)}<span>Issues</span></div></div>
            <div class="gbody">
              <div class="box y">{@render icon('fork', 15)}</div>
              <div class="box f">{@render icon('fork', 15)}</div>
              <div class="box t">Thi</div>
              <div class="box files">
                <div class="fh"><svg width="22" height="22" viewBox="0 0 22 22"><circle cx="11" cy="11" r="11" fill="#f0f0f0" /><path d="M1 5H5V9H1ZM17 5H21V9H17ZM5 13H9V17H13V13H17V21H5Z" fill="#cc6d8f" /></svg></div>
                {#each Array(7) as _}<div class="fr">{@render icon('dir')}</div>{/each}
              </div>
            </div>
          </div>
        </div>
        {@render vscroll(16, 481)}
      </div>
      <div class="hs"><span class="sb"><i class="lt"></i></span><span class="ht"></span><span class="fill"></span><span class="sb"><i class="rt"></i></span><span class="corner"></span></div>
      <div class="status">
        <span style="width:156px">{@render icon('move', 13)}</span><span style="width:154px">{@render icon('selsize', 15)}</span><span style="width:154px">{@render icon('imgsize', 15)}<em>2960 &nbsp;× 900px</em></span><span style="width:154px"></span><span style="width:776px"></span>
        <span class="zm"><em>100%</em><svg width="148" height="22" viewBox="0 0 148 22"><g fill="#fff" stroke="#808080"><circle cx="9" cy="11" r="7.500" /><circle cx="131" cy="11" r="7.500" /></g><path d="M5 11H13M127 11H135M131 7V15" stroke="#444" stroke-width="2" /><path d="M28 10H111V11H28Z" fill="#444" /><path d="M28 11H111V13H28Z" fill="#fff" /><path d="M65.500 2H75.500V16L70.500 20.500L65.500 16Z" fill="#d4d0c8" stroke="#555" /><path d="M66.500 15V3H74" fill="none" stroke="#fff" /></svg></span>
      </div>
    </div>

    <footer>
      <span class="start">{@render icon('win', 16)}<b>Start</b></span>
      <div class="tasks">
        {#each tasks as t}
          <span class="task" class:on={t.on} class:wide={!t.multi}><span class="tbtn">{@render icon(t.icon, 31)}</span>{#if t.multi}<i></i><i></i>{/if}</span>
        {/each}
      </div>
      <span class="fill"></span>
      <div class="tray">{@render icon('t1')}{@render icon('t2')}{@render icon('t3')}{@render icon('t4')}{@render icon('t5')}{@render icon('t6')}{@render icon('t7')}<div class="clock"><span>8:22 PM</span><span>7/5/2020</span></div>{@render icon('show')}</div>
    </footer>

    {@render saveDialog({ x: 472, y: 179, w: 800, h: 480, search: '__', rows: rowsSave, thumb: [16, 197], nthumb: [60, 192], file: 'tristian_protected_by_fbia+jesus.eye.self=', active: true })}
  </div>
</main>

<style>
  :global(body) { margin: 0; background: #000; }
  main { display: flex; width: 2960px; height: 900px; overflow: hidden; color: #000; font: 11px/13px 'DejaVu Sans Condensed', 'DejaVu Sans', sans-serif; letter-spacing: -0.35px; white-space: nowrap; }
  main :global(*) { box-sizing: border-box; }
  .ic { flex: none; display: block; }
  .fill { flex: 1; }
  .left { width: 1360px; flex: none; overflow: hidden; }
  .screen { width: 1360px; height: 900px; flex: none; background: #000; padding-top: 70px; overflow: hidden; }
  .desk { position: relative; height: 768px; background: #3a6ea5; overflow: hidden; }
  .layer { position: absolute; left: 0; top: -70px; width: 1360px; height: 900px; }
  .beam { position: absolute; left: 872px; top: 715px; }

  .win { position: absolute; display: flex; flex-direction: column; padding: 4px; background: #d4d0c8; box-shadow: inset -1px -1px #404040, inset 1px 1px #d4d0c8, inset -2px -2px #808080, inset 2px 2px #fff; }
  .title { display: flex; align-items: center; height: 18px; flex: none; padding: 0 2px 0 3px; margin-bottom: 1px; color: #d4d0c8; background: linear-gradient(90deg, #808080, #c0c0c0); }
  .title.active { background: linear-gradient(90deg, #0a246a, #a6caf0); color: #fff; }
  .title b { flex: 1; margin-left: 2px; font-size: 11px; padding-top: 1px; }
  .cap { width: 16px; height: 14px; flex: none; background: #d4d0c8; box-shadow: inset -1px -1px #404040, inset 1px 1px #fff, inset -2px -2px #808080; }
  .cap svg { display: block; }
  .closegap { width: 2px; flex: none; }

  i { display: block; flex: none; }
  .dn { width: 7px; height: 4px; background: currentColor; clip-path: polygon(0 0, 100% 0, 50% 100%); }
  .dn.s { width: 6px; height: 4px; }
  .up { width: 7px; height: 4px; background: currentColor; clip-path: polygon(0 100%, 100% 100%, 50% 0); }
  .lt { width: 4px; height: 8px; background: #000; clip-path: polygon(100% 0, 100% 100%, 0 50%); }
  .rt { width: 4px; height: 8px; background: #000; clip-path: polygon(0 0, 0 100%, 100% 50%); }

  .band { display: flex; align-items: center; height: 36px; flex: none; padding: 0 3px 0 3px; border: 1px solid #808080; box-shadow: inset 1px 1px #fff, 0 1px #fff; }
  .circles { margin-right: -2px; flex: none; }
  .addr { display: flex; align-items: center; flex: 1; height: 22px; border: 1px solid; border-color: #808080 #fff #fff #808080; border-width: 1px 1px 1px 2px; }
  .crumbs { flex: 1; display: grid; grid-template-columns: 22px 11px 47px 11px 92px 11px 75px 12px auto; align-items: center; }
  .go { margin-left: 12px; }
  .find { width: 222px; height: 22px; margin-left: 4px; margin-right: 1px; padding: 4px 0 0 7px; background: #fff; border: 1px solid; border-color: #808080 #fff #fff #808080; box-shadow: inset 1px 1px #404040; flex: none; }
  .lens { flex: none; }
  .dialog .find { width: 183px; }
  .dialog .circles { margin-right: 14px; }

  .menu { display: flex; height: 20px; flex: none; padding: 4px 0 0 7px; color: #808080; }
  .menu span { width: 37px; }
  .menu span:first-child { width: 32px; }
  .menu span:nth-child(2) { width: 34px; }
  .menu span:nth-child(4) { width: 41px; }
  .tools { display: flex; align-items: center; height: 30px; flex: none; padding: 0 15px 2px 12px; }
  .org { width: 52px; }
  .pv { width: 19px; margin-left: 17px; }
  .pt { width: 56px; }
  .pr { width: 39px; margin-left: 15px; }
  .bu { width: 39px; }
  .vi { width: 29px; }
  .pn { width: 28px; margin-left: 15px; }
  .nf { margin-left: 21px; }
  .dlg .tools { height: 31px; padding-bottom: 0; }
  .vd { margin: 0 15px 0 13px; }
  .panes { display: flex; flex: 1; min-height: 0; background: #fff; }
  .gap { width: 3px; background: #d4d0c8; flex: none; }
  .nav { width: 141px; flex: none; overflow: hidden; border-left: 1px solid #fff; }
  .nrow { display: flex; align-items: center; height: 19px; padding-left: 19px; gap: 5px; }
  .nrow.sub { padding-left: 29px; gap: 4px; }
  .nrow.on { background: #d4d0c8; }
  .nrow span { padding-top: 2px; }
  .list { flex: 1; display: flex; flex-direction: column; min-width: 0; overflow: hidden; }
  .head { display: flex; height: 23px; flex: none; }
  .head span { display: flex; align-items: center; width: 120px; padding-left: 4px; background: #d4d0c8; box-shadow: inset -1px -1px #404040, inset 1px 1px #fff, inset -2px -2px #808080; padding-top: 2px; flex: none; }
  .head .c1 { width: 272px; padding-left: 15px; }
  .head .c4 { width: 80px; }
  .head .c0 { width: 592px; }
  .head .c5 { flex: 1; width: auto; }
  .sort { width: 7px; height: 4px; margin: -3px 0 0 8px; background: #808080; clip-path: polygon(0 100%, 100% 100%, 50% 0); }
  .rows { flex: 1; margin-top: -1px; overflow: hidden; min-height: 0; }
  .row { display: flex; align-items: center; width: 574px; height: 22px; margin-left: 14px; padding-left: 4px; }
  .row.sel { background: #0a246a; color: #fff; }
  .row span { padding-top: 2px; }
  .row .n { width: 240px; margin-left: 2px; }
  .row .d { width: 121px; }
  .row .z { flex: 1; text-align: right; padding-right: 4px; }
  .vs { width: 16px; flex: none; display: flex; flex-direction: column; color: #000; background: repeating-conic-gradient(#fff 0 25%, #d4d0c8 0 50%) 0 0 / 2px 2px; }
  .sb { width: 16px; height: 16px; flex: none; display: flex; align-items: center; justify-content: center; }
  .sb, .thumb, .ht { background: #d4d0c8; box-shadow: inset -1px -1px #404040, inset 1px 1px #d4d0c8, inset -2px -2px #808080, inset 2px 2px #fff; }
  .thumb { flex: none; }
  .last { margin-top: auto; }
  .info { display: flex; height: 53px; flex: none; border-top: 5px solid #d4d0c8; background: #fff; padding: 7px 0 0 19px; }
  .flower { flex: none; }
  .grid { display: grid; grid-template-columns: 51px 64px 96px 111px 150px; grid-template-rows: 18px 18px; height: 36px; margin-left: 14px; margin-top: -3px; align-items: center; }
  .grid .r { justify-self: end; padding-right: 4px; }
  .grid .tight { letter-spacing: -0.5px; }
  .grid .fname { font-size: 13px; letter-spacing: -0.3px; }

  .arrange { display: flex; align-items: center; width: 100%; height: 56px; padding-left: 688px; gap: 12px; }
  .arrange span:first-child { width: 60px; }

  .form { display: grid; grid-template-columns: 125px 1fr; row-gap: 1px; padding: 10px 6px 0 0; flex: none; }
  .form label { text-align: right; padding: 5px 5px 0 0; }
  .combo { display: flex; height: 22px; background: #fff; border: 1px solid; border-color: #808080 #fff #fff #808080; box-shadow: inset 1px 1px #404040, inset -1px -1px #d4d0c8; padding: 2px; justify-content: space-between; }
  .combo > span:first-child { display: flex; padding: 2px 0 0 1px; letter-spacing: 0.03px; }
  .combo .sb { height: 17px; }
  .caret { width: 1px; height: 13px; background: #000; margin-left: 1px; }
  .acts { display: flex; align-items: flex-start; height: 62px; flex: none; padding: 24px 17px 0 10px; gap: 12px; }
  .hide { display: flex; align-items: center; gap: 3px; width: 86px; height: 21px; margin-top: 5px; padding-left: 2px; box-shadow: inset -1px -1px #404040, inset 1px 1px #fff, inset -2px -2px #808080; }
  .btn { width: 88px; height: 26px; line-height: 26px; text-align: center; letter-spacing: 0; box-shadow: inset -1px -1px #404040, inset 1px 1px #fff, inset -2px -2px #808080; }
  .btn.def { border: 1px solid #000; line-height: 24px; }
  .enc .combo { width: 200px; height: 23px; margin-top: 1px; }
  .grip { position: absolute; right: 4px; bottom: 4px; }

  .paint { position: relative; width: 1600px; height: 900px; flex: none; background: #d4d0c8; display: flex; flex-direction: column; }
  header { display: flex; align-items: center; height: 19px; flex: none; border-bottom: 1px solid #d4d0c8; padding: 0 2px; background: linear-gradient(90deg, #808080, #c0c0c0); color: #d4d0c8; }
  header .bar { width: 1px; height: 14px; margin: 0 4px 0 10px; background: #c8c8c8; }
  .qa { display: flex; align-items: center; gap: 8px; height: 17px; padding: 0 3px 0 6px; background: radial-gradient(#b4b4b4, #8a8a8a); color: #000; }
  .qa + .bar { margin-left: 7px; }
  header b { flex: 1; letter-spacing: 0.15px; padding-top: 2px; }
  .tabs { display: flex; align-items: flex-start; height: 24px; flex: none; padding: 1px 4px 0 0; background: #dfe9f5; border-bottom: 1px solid #b3c6dd; color: #1e395b; letter-spacing: 0.1px; }
  .tabs > .ic { margin-top: 4px; }
  .app { display: flex; align-items: center; gap: 6px; width: 56px; height: 22px; padding-left: 15px; margin-right: 2px; color: #fff; background: linear-gradient(#3d74bb, #2159a6 50%, #173f86 51%, #3373c4); border: 1px solid #16397c; }
  .tab { width: 53px; height: 23px; padding: 6px 0 0 12px; margin-right: 5px; }
  .tab.on { background: #fbfdff; border: 1px solid #b8c9dd; border-bottom: 0; border-radius: 2px 2px 0 0; padding-top: 5px; }
  .ribbon { display: flex; height: 93px; flex: none; background: linear-gradient(#f8fbfe, #e6eff9 40%, #dce6f4 50%, #dde8f6); border-bottom: 2px solid #9db2cf; color: #1e395b; letter-spacing: 0; }
  .grp { display: flex; flex-direction: column; flex: none; position: relative; padding-top: 4px; background: linear-gradient(#aebfd4, #aebfd4) right 0 top 6px / 1px 78px no-repeat; }
  .body { display: flex; height: 66px; padding-left: 5px; }
  .lab { text-align: center; padding-top: 6px; color: #7286a2; letter-spacing: 0.2px; }
  .big { display: flex; flex-direction: column; align-items: center; width: 42px; height: 66px; flex: none; border: 1px solid transparent; border-radius: 2px; }
  .big.hot { border-color: #c79a3a; background: linear-gradient(#fbd08c, #fcc264 35%, #fdb94a 50%, #fed67c); }
  .big .pic { height: 36px; display: flex; align-items: center; justify-content: center; flex: none; margin-bottom: 2px; }
  .big .dn { margin-top: 5px; opacity: .75; }
  .mid { justify-content: center; padding: 0; }
  .off { color: #8d99a6; }
  .col { padding-left: 4px; }
  .col.im { padding-left: 3px; }
  .small { display: flex; align-items: center; height: 22px; gap: 3px; }
  .small .dn { margin-left: 2px; opacity: .75; width: 6px; height: 4px; }
  .tb { flex-direction: column; gap: 7px; padding-top: 8px; }
  .trio { display: flex; width: 69px; height: 22px; border: 1px solid #a9bdd6; background: #edf3fa; }
  .trio span { flex: 1; display: flex; align-items: center; justify-content: center; border-right: 1px solid #c4d2e4; }
  .trio span:last-child { border: 0; }
  .trio .A { font: bold 17px 'Liberation Serif', serif; color: #1e395b; }
  .sh { padding: 3px 0 0 6px; }
  .gallery { display: flex; width: 157px; height: 60px; border: 1px solid #a9bdd6; background: #f4f8fc; }
  .shapes { display: grid; grid-template-columns: repeat(7, 20px); grid-auto-rows: 19.500px; justify-items: center; align-items: center; width: 141px; border-right: 1px solid #ccd8e6; }
  .gs { flex: 1; display: flex; flex-direction: column; align-items: center; justify-content: space-around; color: #5d7290; }
  .gs i { width: 5px; height: 3px; }
  .gs .more { width: 7px; height: 4px; color: #1e395b; }
  .sh .col { margin-top: -3px; padding-left: 4px; }
  .sw { display: block; }
  .sw.one { width: 32px; height: 32px; background: #000; border: 1px solid #777; box-shadow: inset 0 0 0 1px #e8dcc0; }
  .sw.two { width: 24px; height: 24px; background: #fff; border: 1px solid #777; }
  .pal { display: grid; grid-template-columns: repeat(10, 20px); grid-auto-rows: 20px; gap: 2px; padding: 1px 0 0 1px; width: 219px; }
  .pal span { border: 1px solid #808080; box-shadow: inset 0 0 0 1px #fff; }
  .pal .none { box-shadow: none; }
  .rainbow { width: 29px; height: 29px; border: 1px solid #777; box-shadow: inset 0 0 0 2px #fff; padding: 3px; background-clip: content-box; background-image: linear-gradient(transparent, #8888), linear-gradient(90deg, red, #ff0, #0f0, #0ff, #00f, #f0f, red); }

  .work { flex: none; height: 721px; background: #c5cfe2; }
  .canvas { display: flex; height: 678px; }
  .sheet { display: flex; width: 1579px; height: 674px; margin: 4px 0 0 5px; background: #fff; overflow: hidden; flex: none; }
  .hs { display: flex; height: 16px; background: repeating-conic-gradient(#fff 0 25%, #d4d0c8 0 50%) 0 0 / 2px 2px; }
  .ht { width: 827px; }
  .corner { width: 16px; background: #d4d0c8; }
  .status { display: flex; gap: 2px; height: 27px; padding: 2px 0; background: #d4d0c8; }
  .status > span { display: flex; align-items: center; gap: 4px; height: 24px; padding-left: 3px; border: 1px solid; border-color: #808080 #fff #fff #808080; flex: none; }
  .status em { font-style: normal; letter-spacing: -0.1px; }
  .status > .zm { width: 195px; padding-left: 17px; gap: 5px; }

  .chrome { width: 219px; flex: none; background: #fff; color: #5f6368; letter-spacing: -0.2px; }
  .ctabs { display: flex; height: 34px; background: #e6e9ed; }
  .ct { display: flex; align-items: center; width: 117px; height: 34px; padding-left: 20px; gap: 7px; flex: none; }
  .ct span { width: 46px; overflow: hidden; mask-image: linear-gradient(90deg, #000 55%, #0003); margin-right: 3px; letter-spacing: -0.45px; }
  .ct.on { background: #fff; border-radius: 8px 0 0 0; padding-left: 12px; }
  .cnav { display: flex; align-items: center; height: 36px; padding-left: 14px; color: #5f6368; }
  .bk { width: 32px; }
  .fwd { width: 32px; color: #bbb; transform: scaleX(-1); transform-origin: 8px 50%; }
  .url { display: flex; align-items: center; gap: 9px; margin-left: 15px; width: 140px; height: 28px; padding-left: 12px; border-radius: 14px 0 0 14px; background: #f1f3f4; color: #333; font-size: 14px; letter-spacing: -0.35px; }
  .url span { margin-left: 1px; }
  .marks { display: flex; align-items: center; height: 33px; padding: 0 0 3px 15px; color: #3c4043; }
  .dots { display: grid; grid-template-columns: repeat(3, 3px); gap: 2px; width: 23px; }
  .dots i { height: 3px; }
  .ap { width: 40px; }
  .fam { margin-left: 8px; letter-spacing: -0.3px; }
  .gtabs { display: flex; height: 65px; border-top: 1px solid #dcdee0; border-bottom: 1px solid #e1e4e8; background: #fafbfc; padding-left: 32px; color: #24292e; font-size: 12px; letter-spacing: -0.3px; }
  .gt { display: flex; align-items: center; gap: 5px; height: 65px; padding: 14px 0 0 16px; }
  .gt.on { width: 86px; border-bottom: 2px solid #f9826c; gap: 7px; margin-right: 1px; padding-top: 16px; }
  .gt b { letter-spacing: -0.6px; }
  .gbody { padding: 32px 0 0 184px; color: #24292e; }
  .box { width: 60px; border: 1px solid #e1e4e8; border-radius: 6px; background: #fafbfc; padding-left: 17px; display: flex; align-items: center; margin-bottom: 16px; }
  .box.y { height: 54px; background: #fffbdd; border-color: #dcd6ae; }
  .box.f { height: 33px; color: #586069; }
  .box.t { height: 54px; font-size: 13px; padding-left: 16px; }
  .box.files { display: block; padding: 0; background: #fff; }
  .fh { height: 54px; padding: 16px 0 0 12px; background: #f1f8ff; border-radius: 6px 0 0; }
  .fr { height: 37px; border-top: 1px solid #e1e4e8; padding: 11px 0 0 15px; }

  footer { display: flex; align-items: flex-start; height: 43px; flex: none; border-top: 1px solid #fff; padding: 2px 3px 0 2px; background: #d4d0c8; }
  .start { display: flex; align-items: center; gap: 1px; width: 52px; height: 38px; padding-left: 2px; box-shadow: inset -1px -1px #404040, inset 1px 1px #fff, inset -2px -2px #808080; }
  .start b { font-size: 12px; letter-spacing: -0.7px; }
  .tasks { display: flex; margin-left: 9px; gap: 2px; }
  .task { display: flex; width: 48px; height: 38px; }
  .tbtn { display: flex; align-items: center; justify-content: center; width: 40px; box-shadow: inset -1px -1px #404040, inset 1px 1px #fff, inset -2px -2px #808080; }
  .wide .tbtn { width: 48px; }
  .task i { width: 4px; box-shadow: inset -1px -1px #404040, inset 0 1px #fff, inset -2px -2px #808080; }
  .task.on .tbtn { background: #fff; box-shadow: inset 1px 1px #404040, inset 2px 2px #808080; }
  .task.on i { box-shadow: inset 0 1px #404040, inset -1px 0 #fff; }
  .tray { display: flex; align-items: center; gap: 8px; width: 251px; height: 38px; padding-left: 7px; border: 1px solid; border-color: #808080 #fff #fff #808080; }
  .clock { display: flex; flex-direction: column; gap: 3px; width: 54px; padding-top: 1px; text-align: center; letter-spacing: -0.2px; }
</style>
